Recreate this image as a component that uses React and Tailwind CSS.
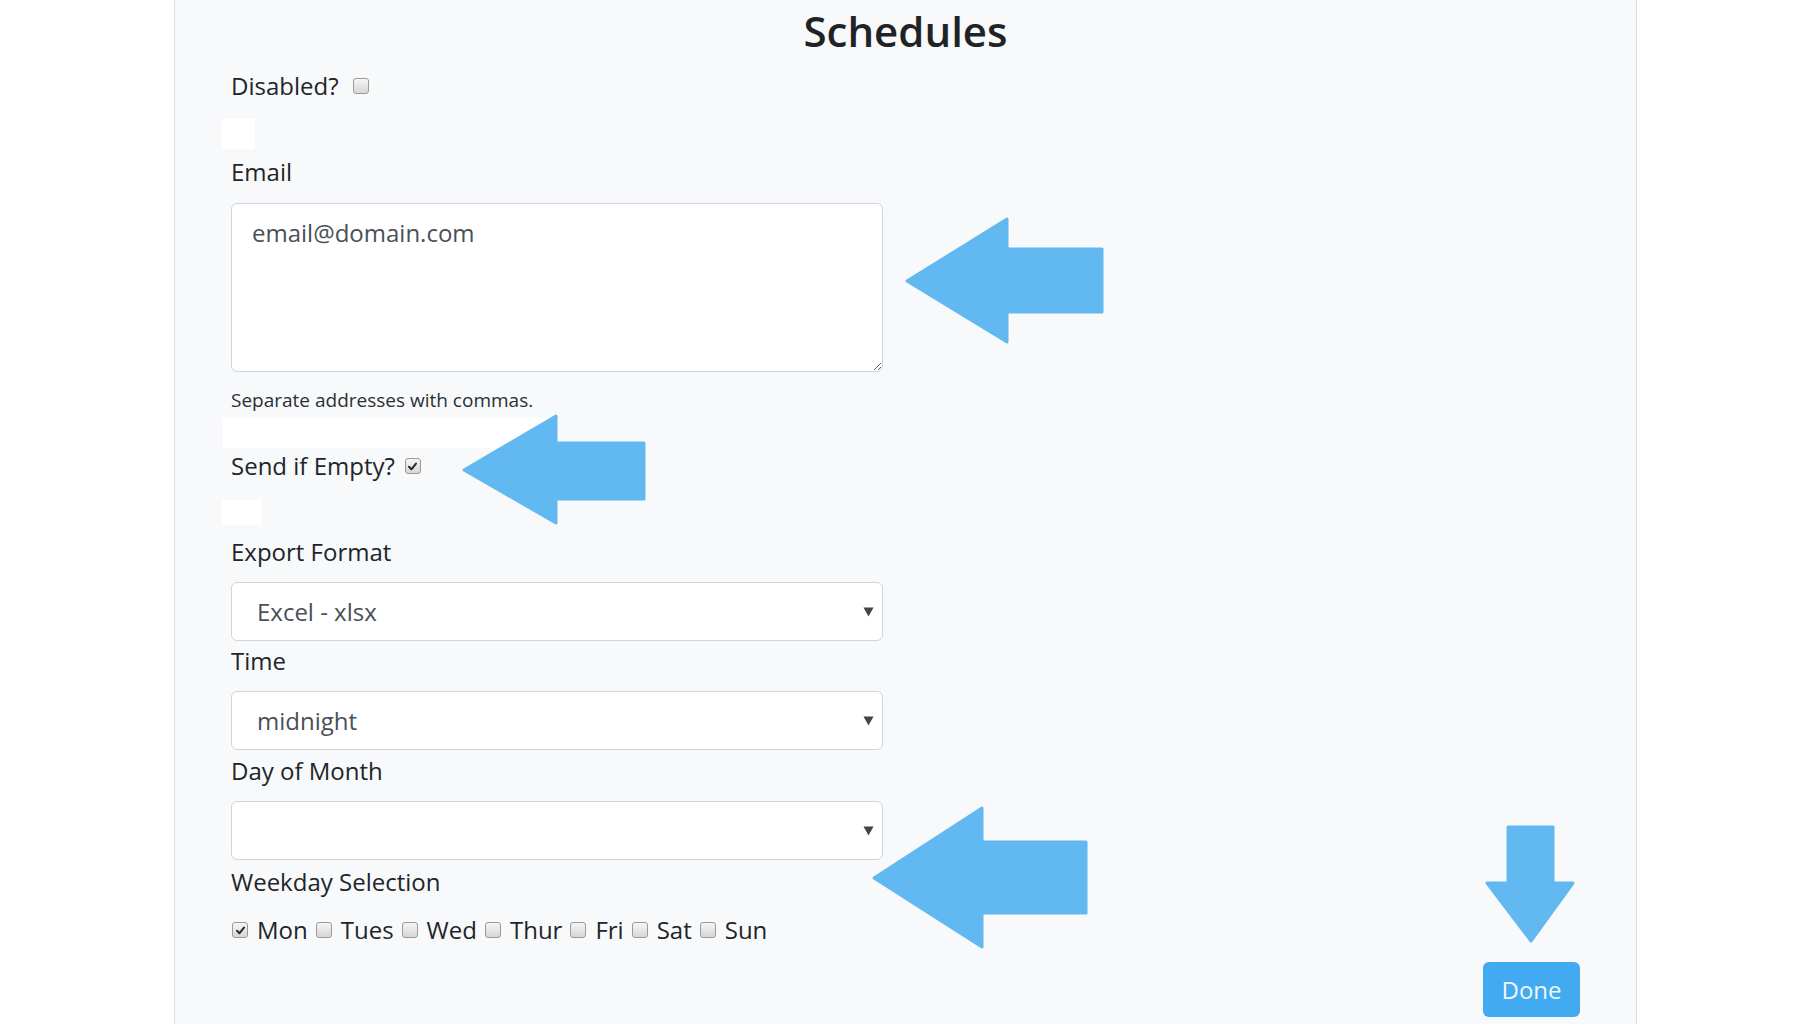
const font = { fontFamily: '"Open Sans", "Noto Sans", sans-serif' }

function Check({ checked }) {
  return (
    <span className="inline-flex shrink-0 items-center justify-center w-[16px] h-[16px] rounded-[3px] border border-[#9a9a9a] bg-gradient-to-b from-[#f6f6f6] to-[#d6d6d6] align-middle">
      {checked && (
        <svg width="11" height="11" viewBox="0 0 11 11">
          <path d="M2 5.8 L4.4 8.3 L9 2.6" fill="none" stroke="#2b2b2b" strokeWidth="2" strokeLinecap="round" strokeLinejoin="round" />
        </svg>
      )}
    </span>
  )
}

function Select({ value }) {
  return (
    <div className="mt-[12px] flex items-center justify-between w-[652px] h-[59px] rounded-[6px] border border-[#ced4da] bg-white pl-[25px] pr-[8px]">
      <span className="text-[24px] leading-[36px] text-[#495057]">{value}</span>
      <svg width="11" height="10" viewBox="0 0 11 10">
        <polygon points="0.5,0.5 10.5,0.5 5.5,9.5" fill="#444" />
      </svg>
    </div>
  )
}

const days = ["Mon", "Tues", "Wed", "Thur", "Fri", "Sat", "Sun"]

export default function App() {
  return (
    <div className="relative w-[1809px] h-[1024px] overflow-hidden bg-white text-[#212529]" style={font}>
      <div className="ml-[174px] w-[1463px] h-full bg-[#f8f9fa] border-x border-[#d9dcdf] px-[56px] pt-[6px]">
        <h2 className="text-center text-[42px] leading-[50px] font-semibold text-[#1f2326]">
          Schedules
        </h2>

        <div className="mt-[12px] flex items-center text-[24px] leading-[36px]">
          <span>Disabled?</span>
          <span className="ml-[14px] flex">
            <Check />
          </span>
        </div>

        <div className="mt-[15px] -ml-[9px] w-[33px] h-[30px] bg-white" />

        <div className="mt-[5px] text-[24px] leading-[36px]">Email</div>
        <textarea
          className="mt-[13px] block w-[652px] h-[169px] rounded-[6px] border border-[#ced4da] bg-white px-[20px] pt-[11px] pb-[7px] text-[24px] leading-[36px] text-[#495057] outline-none"
          defaultValue="email@domain.com"
        />
        <div className="mt-[14px] text-[19px] leading-[28px] text-[#2b2f33]">Separate addresses with commas.</div>

        <div className="mt-[4px] -ml-[8px] w-[332px] h-[30px] bg-white" />

        <div className="flex items-center text-[24px] leading-[36px]">
          <span>Send if Empty?</span>
          <span className="ml-[10px] flex">
            <Check checked />
          </span>
        </div>

        <div className="mt-[16px] -ml-[9px] w-[40px] h-[25px] bg-white" />

        <div className="mt-[9px] text-[24px] leading-[36px]">Export Format</div>
        <Select value="Excel - xlsx" />

        <div className="mt-[2px] text-[24px] leading-[36px]">Time</div>
        <div className="mt-[2px]">
          <Select value="midnight" />
        </div>

        <div className="mt-[3px] text-[24px] leading-[36px]">Day of Month</div>
        <div className="mt-[2px]">
          <Select value="" />
        </div>

        <div className="mt-[4px] text-[24px] leading-[36px]">Weekday Selection</div>
        <div className="mt-[12px] flex items-center text-[24px] leading-[36px]">
          {days.map((d, i) => (
            <div key={d} className="flex items-center">
              <span className="flex ml-[1px]">
                <Check checked={i === 0} />
              </span>
              <span className="ml-[9px] mr-[7px]">{d}</span>
            </div>
          ))}
        </div>

        <div className="mt-[14px] flex justify-end">
          <button className="w-[97px] h-[55px] rounded-[6px] bg-[#41aaf1] text-[24px] leading-[36px] text-[#eef7fe]">
            Done
          </button>
        </div>
      </div>

      <svg className="absolute inset-0 pointer-events-none" width="1809" height="1024" viewBox="0 0 1809 1024">
        <g fill="#62b8f0" stroke="#62b8f0" strokeWidth="3" strokeLinejoin="round">
          <polygon points="907,281 1007,219 1007,249 1102,249 1102,312 1007,312 1007,342" />
          <polygon points="464,470 556,416 556,443 644,443 644,499 556,499 556,523" />
          <polygon points="874,878 982,808 982,842 1086,842 1086,913 982,913 982,947" />
          <polygon points="1508,827 1553,827 1553,883 1573,883 1531,941 1487,883 1508,883" />
        </g>
      </svg>
    </div>
  )
}
